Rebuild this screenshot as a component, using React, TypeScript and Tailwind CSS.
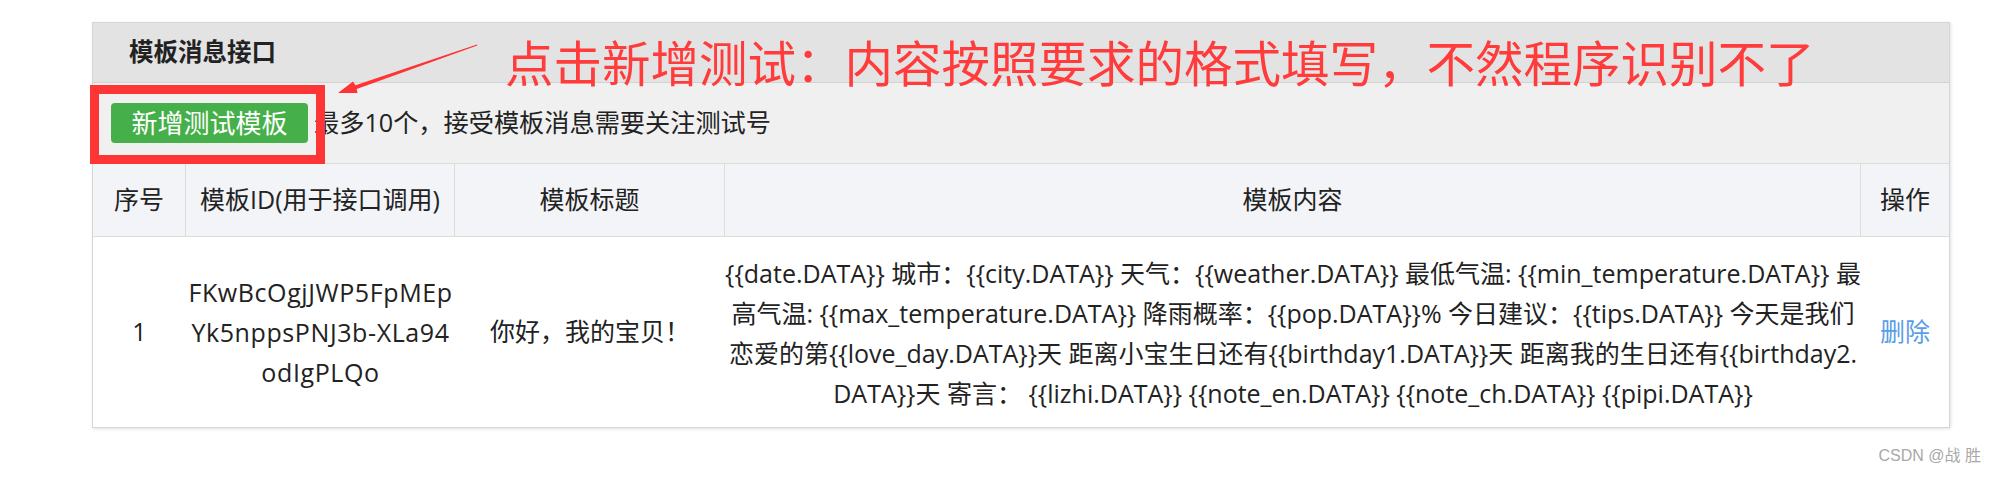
import React from "react";

const FONT = { fontFamily: '"Open Sans", "Noto Sans CJK SC", sans-serif' };

const contentLines = [
  "{{date.DATA}} 城市：{{city.DATA}} 天气：{{weather.DATA}} 最低气温: {{min_temperature.DATA}} 最",
  "高气温: {{max_temperature.DATA}} 降雨概率：{{pop.DATA}}% 今日建议：{{tips.DATA}} 今天是我们",
  "恋爱的第{{love_day.DATA}}天 距离小宝生日还有{{birthday1.DATA}}天 距离我的生日还有{{birthday2.",
  "DATA}}天 寄言： {{lizhi.DATA}} {{note_en.DATA}} {{note_ch.DATA}} {{pipi.DATA}}",
];

const idLines = ["FKwBcOgjJWP5FpMEp", "Yk5nppsPNJ3b-XLa94", "odIgPLQo"];

function Arrow() {
  // tip (338,93), start (477,45)
  return (
    <svg
      className="absolute left-0 top-0 pointer-events-none"
      width="2000"
      height="477"
      viewBox="0 0 2000 477"
    >
      <polygon
        points="338,93 353,81.5 355.5,85.3 477,44.6 477.3,45.4 356.7,89 357.5,93"
        fill="#ff3333"
      />
    </svg>
  );
}

export default function App() {
  return (
    <div
      className="relative w-[2000px] h-[477px] bg-white overflow-hidden text-[#222]"
      style={FONT}
    >
      <div className="pt-[22px] pl-[92px]">
        <div className="w-[1858px] border border-[#d6d6d6] shadow-[1px_1px_3px_rgba(0,0,0,0.12)]">
          {/* panel header */}
          <div className="h-[60px] bg-[#e3e3e3] border-b border-[#d2d2d2] flex items-center pl-[36px]">
            <span className="text-[24.5px] font-bold leading-none">模板消息接口</span>
          </div>
          {/* toolbar */}
          <div className="h-[81px] bg-[#f0f0f0] border-b border-[#dcdcdc] flex items-center pl-[18px]">
            <button className="w-[197px] h-[40px] rounded-[4px] bg-[#45b04a] text-white text-[26px] leading-none flex items-center justify-center">
              新增测试模板
            </button>
            <span className="ml-[6px] text-[25.2px] leading-none">
              最多10个，接受模板消息需要关注测试号
            </span>
          </div>
          {/* table */}
          <div className="grid grid-cols-[93px_269px_270px_1136px_1fr] text-[25px]">
            <div className="h-[73px] bg-[#f2f4f8] border-b border-r border-[#dcdcdc] flex items-center justify-center">序号</div>
            <div className="h-[73px] bg-[#f2f4f8] border-b border-r border-[#dcdcdc] flex items-center justify-center">模板ID(用于接口调用)</div>
            <div className="h-[73px] bg-[#f2f4f8] border-b border-r border-[#dcdcdc] flex items-center justify-center">模板标题</div>
            <div className="h-[73px] bg-[#f2f4f8] border-b border-r border-[#dcdcdc] flex items-center justify-center">模板内容</div>
            <div className="h-[73px] bg-[#f2f4f8] border-b border-[#dcdcdc] flex items-center justify-center">操作</div>

            <div className="h-[190px] flex items-center justify-center">1</div>
            <div className="h-[190px] flex flex-col items-center justify-center leading-[40px] tracking-[0.6px]">
              {idLines.map((l) => (
                <div key={l} className="whitespace-nowrap">{l}</div>
              ))}
            </div>
            <div className="h-[190px] flex items-center justify-center">你好，我的宝贝！</div>
            <div className="h-[190px] flex flex-col items-center justify-center leading-[40px] pt-[1px]">
              {contentLines.map((l) => (
                <div key={l} className="whitespace-nowrap">{l}</div>
              ))}
            </div>
            <div className="h-[190px] flex items-center justify-center text-[#5a9de8]">删除</div>
          </div>
        </div>
      </div>

      <div className="flex justify-end pr-[19px] pt-[20px]">
        <span className="text-[16px] text-[#a8a8a8] leading-none" style={{ fontFamily: '"Liberation Sans", "Noto Sans CJK SC", sans-serif' }}>
          CSDN @战 胜
        </span>
      </div>

      {/* annotation overlays */}
      <div className="absolute left-[90px] top-[85px] w-[235px] h-[79px] border-[9px] border-[#fd3535] pointer-events-none" />
      <div className="absolute left-[505px] top-[31px] text-[48.5px] leading-[60px] text-[#ff3b3b] whitespace-nowrap" style={{ fontFamily: '"Noto Sans CJK SC", sans-serif' }}>
        点击新增测试：内容按照要求的格式填写，不然程序识别不了
      </div>
      <Arrow />
    </div>
  );
}
